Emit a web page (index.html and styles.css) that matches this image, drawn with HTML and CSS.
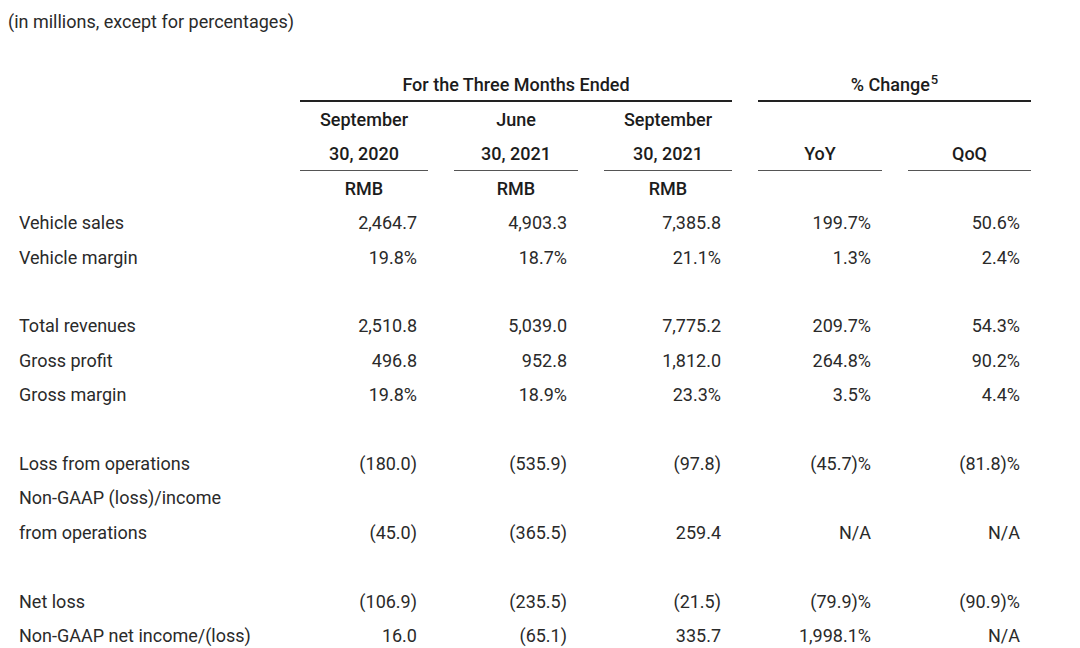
FILE: index.html
```html
<!DOCTYPE html>
<html>
<head>
<meta charset="utf-8">
<link rel="stylesheet" href="styles.css">
</head>
<body>
<p class="note">(in millions, except for percentages)</p>
<div class="fin">
  <div class="lbl"></div>
  <div class="grp g1">For the Three Months Ended</div>
  <div class="grp g2">% Change<sup>5</sup></div>

  <div class="lbl"></div>
  <div class="hd">September</div><div class="hd">June</div><div class="hd">September</div><div class="hd"></div><div class="hd"></div>

  <div class="lbl"></div>
  <div class="hd ul">30, 2020</div><div class="hd ul">30, 2021</div><div class="hd ul">30, 2021</div><div class="hd ul">YoY</div><div class="hd ul">QoQ</div>

  <div class="lbl"></div>
  <div class="hd">RMB</div><div class="hd">RMB</div><div class="hd">RMB</div><div class="hd"></div><div class="hd"></div>

  <div class="lbl">Vehicle sales</div>
  <div class="num">2,464.7</div><div class="num">4,903.3</div><div class="num">7,385.8</div><div class="num">199.7%</div><div class="num">50.6%</div>

  <div class="lbl">Vehicle margin</div>
  <div class="num">19.8%</div><div class="num">18.7%</div><div class="num">21.1%</div><div class="num">1.3%</div><div class="num">2.4%</div>

  <div class="blank"></div>

  <div class="lbl">Total revenues</div>
  <div class="num">2,510.8</div><div class="num">5,039.0</div><div class="num">7,775.2</div><div class="num">209.7%</div><div class="num">54.3%</div>

  <div class="lbl">Gross profit</div>
  <div class="num">496.8</div><div class="num">952.8</div><div class="num">1,812.0</div><div class="num">264.8%</div><div class="num">90.2%</div>

  <div class="lbl">Gross margin</div>
  <div class="num">19.8%</div><div class="num">18.9%</div><div class="num">23.3%</div><div class="num">3.5%</div><div class="num">4.4%</div>

  <div class="blank"></div>

  <div class="lbl">Loss from operations</div>
  <div class="num">(180.0)</div><div class="num">(535.9)</div><div class="num">(97.8)</div><div class="num">(45.7)%</div><div class="num">(81.8)%</div>

  <div class="lbl">Non-GAAP (loss)/income</div>
  <div class="num"></div><div class="num"></div><div class="num"></div><div class="num"></div><div class="num"></div>

  <div class="lbl">from operations</div>
  <div class="num">(45.0)</div><div class="num">(365.5)</div><div class="num">259.4</div><div class="num">N/A</div><div class="num">N/A</div>

  <div class="blank"></div>

  <div class="lbl">Net loss</div>
  <div class="num">(106.9)</div><div class="num">(235.5)</div><div class="num">(21.5)</div><div class="num">(79.9)%</div><div class="num">(90.9)%</div>

  <div class="lbl">Non-GAAP net income/(loss)</div>
  <div class="num">16.0</div><div class="num">(65.1)</div><div class="num">335.7</div><div class="num">1,998.1%</div><div class="num">N/A</div>
</div>
</body>
</html>
```

FILE: styles.css
```css
html, body {
  background: #ffffff;
}
body {
  margin: 0;
  padding: 8px;
  font-family: Roboto, "Noto Sans", Arial, sans-serif;
  font-size: 18px;
  color: #1c1c1c;
}
.note {
  margin: 0;
  line-height: 28px;
  font-weight: 400;
  color: #2a2a2a;
}
.fin {
  margin-top: 32px;
  display: grid;
  grid-template-columns: 266px 128px 124px 128px 124px 123px;
  column-gap: 26px;
  grid-auto-rows: 34.4px;
}
.fin > div {
  box-sizing: border-box;
  display: flex;
  align-items: center;
  padding-top: 0;
  white-space: nowrap;
}
.lbl {
  padding-left: 11px;
  font-weight: 400;
  color: #2a2a2a;
}
.grp {
  justify-content: center;
  font-weight: 500;
  border-bottom: 2px solid #222;
}
.g1 { grid-column: 2 / 5; }
.g2 { grid-column: 5 / 7; }
.grp sup {
  font-size: 13px;
  align-self: flex-start;
  margin-top: 5px;
  margin-left: 1px;
  line-height: 1;
}
.hd {
  justify-content: center;
  font-weight: 500;
}
.hd.ul {
  border-bottom: 1px solid #555;
}
.num {
  justify-content: flex-end;
  padding-right: 11px;
  font-weight: 400;
  color: #2a2a2a;
}
.blank {
  grid-column: 1 / 7;
}
```
